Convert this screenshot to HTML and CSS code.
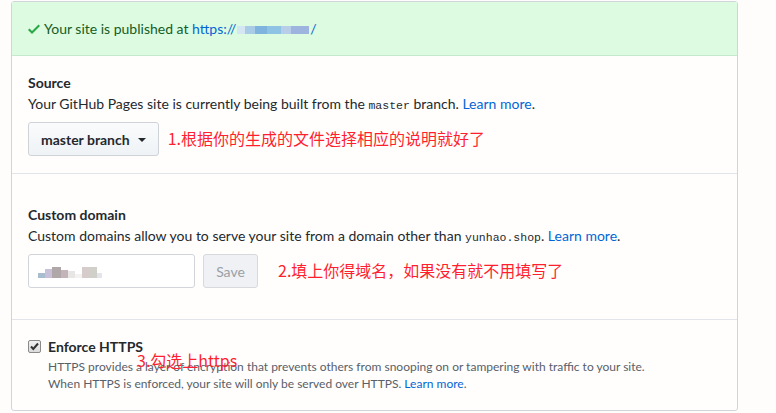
FILE: index.html
```html
<!DOCTYPE html>
<html>
<head>
<meta charset="utf-8">
<link rel="stylesheet" href="styles.css">
</head>
<body>
<div class="box">
  <div class="flash">
    <svg class="check" width="12" height="16" viewBox="0 0 12 16"><path fill="#28a745" d="M12 5l-8 8-4-4 1.5-1.5L4 10l6.5-6.5L12 5z"/></svg>
    <span>Your site is published at <a class="link" href="#">https://<span class="blur"><i class="b1"></i><i class="b2"></i><i class="b3"></i><i class="b4"></i><i class="b5"></i><i class="b6"></i></span>/</a></span>
  </div>
  <div class="section source">
    <h3 class="title">Source</h3>
    <p class="desc">Your GitHub Pages site is currently being built from the <code>master</code> branch. <a class="link" href="#">Learn more</a>.</p>
    <div class="row">
      <button class="btn">master branch <span class="caret"></span></button>
      <span class="note note1">1.根据你的生成的文件选择相应的说明就好了</span>
    </div>
  </div>
  <div class="section domain">
    <h3 class="title">Custom domain</h3>
    <p class="desc">Custom domains allow you to serve your site from a domain other than <code>yunhao.shop</code>. <a class="link" href="#">Learn more</a>.</p>
    <div class="row">
      <div class="input"><span class="iblur"><i class="c1"></i><i class="c2"></i><i class="c3"></i><i class="c4"></i><i class="c5"></i><i class="c0"></i><i class="c6"></i><i class="c7"></i><i class="c8"></i></span></div>
      <button class="btn save" disabled>Save</button>
      <span class="note note2">2.填上你得域名，如果没有就不用填写了</span>
    </div>
  </div>
  <div class="section https">
    <label class="checkrow">
      <span class="cbox"><svg width="11" height="11" viewBox="0 0 11 11"><path d="M2 5.5l2.3 2.5L9 2.5" fill="none" stroke="#333" stroke-width="2"/></svg></span>
      <span class="title">Enforce HTTPS</span>
    </label>
    <p class="note-desc">HTTPS provides a layer of encryption that prevents others from snooping on or tampering with traffic to your site.<br>When HTTPS is enforced, your site will only be served over HTTPS. <a class="link" href="#">Learn more</a>.</p>
    <span class="note note3">3.勾选上https</span>
  </div>
</div>
</body>
</html>
```
FILE: styles.css
```css
* { box-sizing: border-box; }
body {
  margin: 0;
  background: #fefdfc;
  font-family: "Lato", "Noto Sans", sans-serif;
  font-size: 14px;
  color: #24292e;
}
.box {
  margin: 1px 0 0 11px;
  width: 727px;
  border: 1px solid #d1d5da;
  border-radius: 3px;
  background: #fffefd;
}
.flash {
  height: 54px;
  padding: 0 16px;
  display: flex;
  align-items: center;
  gap: 4px;
  background: #dcfbe0;
  border-bottom: 1px solid #c5e9cc;
  color: #165c26;
  font-size: 14px;
}
.check { flex: none; }
.link { color: #0366d6; text-decoration: none; }
.blur { display: inline-flex; vertical-align: middle; height: 8px; margin: 0 1px; }
.blur i { display: inline-block; height: 8px; }
.b1 { width: 8px; background: #d4e6f2; }
.b2 { width: 10px; background: #a8cbe6; }
.b3 { width: 12px; background: #7fb4de; }
.b4 { width: 14px; background: #8fc3e3; }
.b5 { width: 10px; background: #b8cde8; }
.b6 { width: 18px; background: #9db4df; }
.section {
  padding: 16px;
  border-bottom: 1px solid #e1e4e8;
}
.section:last-child { border-bottom: 0; }
.source { height: 118px; padding-top: 16px; }
.domain { height: 146px; padding-top: 30px; }
.https { height: 90px; padding-top: 16px; position: relative; }
.title {
  margin: 0;
  font-size: 14px;
  font-weight: 700;
  line-height: 21px;
  color: #24292e;
}
.desc {
  margin: 0 0 6px;
  line-height: 21px;
  color: #24292e;
}
code {
  font-family: "Liberation Mono", monospace;
  font-size: 11.5px;
}
.row { display: flex; align-items: center; }
.btn {
  height: 34px;
  padding: 0 12px;
  border: 1px solid #cfd3d8;
  border-radius: 3px;
  background: linear-gradient(#fafbfc, #eff3f6);
  font-family: inherit;
  font-size: 14px;
  font-weight: 700;
  color: #24292e;
  display: inline-flex;
  align-items: center;
  gap: 8px;
}
.caret {
  width: 0; height: 0;
  border-left: 4px solid transparent;
  border-right: 4px solid transparent;
  border-top: 4px solid #24292e;
  margin-top: 1px;
}
.note {
  color: #ff1f2f;
  font-family: "Noto Sans CJK SC", sans-serif;
  font-size: 16px;
}
.note1 { margin-left: 9px; margin-top: -3px; }
.note2 { margin-left: 20px; margin-top: -3px; }
.input {
  width: 167px;
  height: 34px;
  border: 1px solid #d1d5da;
  border-radius: 3px;
  background: #fff;
  display: flex;
  align-items: center;
  padding-left: 9px;
}
.iblur { display: inline-flex; height: 14px; align-items: flex-end; }
.iblur i { display: inline-block; width: 7px; }
.c1 { height: 5px; background: #a8bccf; }
.c2 { height: 9px; background: #c8c0d8; }
.c3 { height: 11px; background: #b0a8a8; width: 9px !important; }
.c4 { height: 8px; background: #c2b4b8; }
.c5 { height: 7px; background: #e8e6e4; }
.c0 { height: 4px; background: #f4f2f0; }
.c6 { height: 11px; background: #d6cccc; width: 8px !important; }
.c7 { height: 11px; background: #d0d0c8; }
.c8 { height: 5px; background: #e4e4ea; width: 5px !important; }
.save {
  width: 55px;
  margin-left: 8px;
  justify-content: center;
  padding: 0;
  font-weight: 400;
  color: #9aa0a6;
  background: #eff1f4;
  border-color: #d6d9dd;
}
.checkrow { display: flex; align-items: center; gap: 7px; }
.cbox {
  width: 13px; height: 13px;
  border: 1px solid #8a8a8a;
  border-radius: 2px;
  background: linear-gradient(#f0f0f0, #dcdcdc);
  display: flex; align-items: center; justify-content: center;
}
.note-desc {
  margin: 1px 0 0 20px;
  font-size: 12px;
  line-height: 17px;
  color: #586069;
}
.note3 {
  position: absolute;
  left: 125px;
  top: 28px;
}
```
